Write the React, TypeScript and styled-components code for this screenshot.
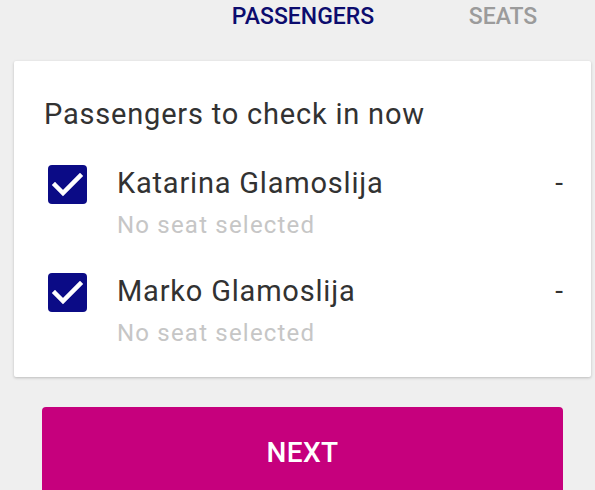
import styled, { createGlobalStyle } from 'styled-components'

const GlobalStyle = createGlobalStyle`
  html, body {
    margin: 0;
    padding: 0;
    background: #efefef;
    font-family: Roboto, "Noto Sans", Arial, sans-serif;
  }
`

const Page = styled.div`
  width: 595px;
  height: 490px;
  overflow: hidden;
  padding: 0 4px 0 14px;
  box-sizing: border-box;
`

const Tabs = styled.div`
  display: flex;
  height: 61px;
  padding-left: 189px;
`

const Tab = styled.div<{ $active?: boolean }>`
  flex: 0 0 200px;
  text-align: center;
  font-size: 23px;
  line-height: 34px;
  font-weight: 500;
  color: ${p => (p.$active ? '#0c0c6e' : '#9b9b9b')};
`

const Card = styled.div`
  background: #fff;
  border-radius: 2px;
  box-shadow: 0 1px 3px rgba(0, 0, 0, 0.22);
  padding: 35px 28px 28px 30px;
  display: flex;
  flex-direction: column;
  gap: 33px;
`

const Title = styled.div`
  font-size: 29px;
  line-height: 36px;
  letter-spacing: 0.8px;
  color: #323232;
`

const List = styled.div`
  display: flex;
  flex-direction: column;
  gap: 32px;
`

const Row = styled.div`
  display: flex;
  align-items: flex-start;
`

const Box = styled.div`
  width: 39px;
  height: 39px;
  margin-left: 4px;
  border-radius: 4px;
  background: #0b0b86;
  flex-shrink: 0;
  display: flex;
  align-items: center;
  justify-content: center;
`

const Info = styled.div`
  flex: 1;
  margin-left: 30px;
  display: flex;
  flex-direction: column;
  gap: 8px;
`

const Name = styled.div`
  font-size: 29px;
  line-height: 36px;
  letter-spacing: 0.8px;
  color: #323232;
`

const Seat = styled.div`
  font-size: 24px;
  line-height: 32px;
  letter-spacing: 1.2px;
  color: #c6c6c6;
`

const Dash = styled.div`
  font-size: 28px;
  line-height: 36px;
  color: #323232;
`

const NextButton = styled.button`
  display: block;
  margin: 30px 28px 0;
  width: calc(100% - 56px);
  height: 92px;
  border: none;
  border-radius: 4px;
  background: #c6007d;
  color: #fff;
  font-family: inherit;
  font-size: 28px;
  font-weight: 500;
  line-height: 92px;
  letter-spacing: 0.4px;
  padding: 0;
`

const Check = () => (
  <svg width="39" height="39" viewBox="0 0 39 39">
    <polyline
      points="7,20 15,28 32,11"
      fill="none"
      stroke="#fff"
      strokeWidth="4.5"
      strokeLinecap="square"
    />
  </svg>
)

const passengers = ['Katarina Glamoslija', 'Marko Glamoslija']

export default function App() {
  return (
    <Page>
      <GlobalStyle />
      <Tabs>
        <Tab $active>PASSENGERS</Tab>
        <Tab>SEATS</Tab>
      </Tabs>
      <Card>
        <Title>Passengers to check in now</Title>
        <List>
          {passengers.map(name => (
            <Row key={name}>
              <Box>
                <Check />
              </Box>
              <Info>
                <Name>{name}</Name>
                <Seat>No seat selected</Seat>
              </Info>
              <Dash>-</Dash>
            </Row>
          ))}
        </List>
      </Card>
      <NextButton>NEXT</NextButton>
    </Page>
  )
}
